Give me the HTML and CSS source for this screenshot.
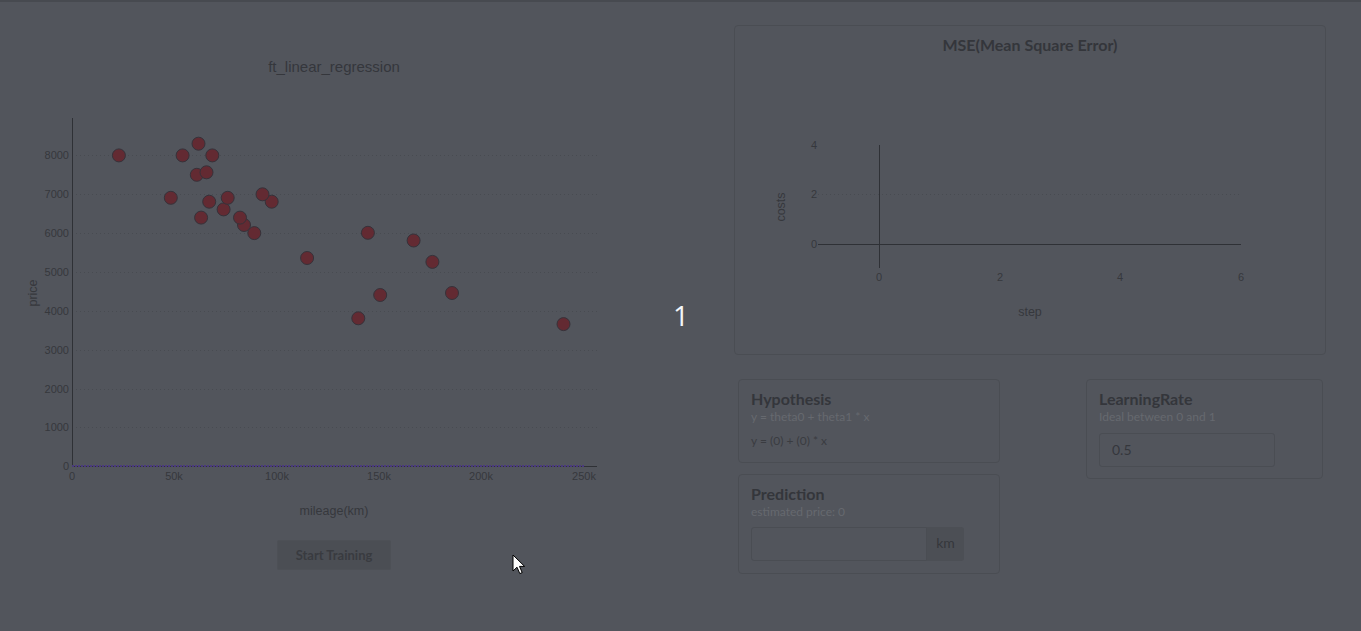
FILE: index.html
```html
<!DOCTYPE html>
<html>
<head>
<meta charset="utf-8">
<link rel="stylesheet" href="styles.css">
</head>
<body>
<div class="app">
  <section class="left">
    <svg class="scatter" width="668" height="528" viewBox="0 2 668 528">
      <text class="ptitle" x="334" y="72" text-anchor="middle">ft_linear_regression</text>
      <g class="grid">
        <line x1="72" x2="597" y1="155.5" y2="155.5"/>
        <line x1="72" x2="597" y1="194.5" y2="194.5"/>
        <line x1="72" x2="597" y1="233.5" y2="233.5"/>
        <line x1="72" x2="597" y1="272.5" y2="272.5"/>
        <line x1="72" x2="597" y1="311.5" y2="311.5"/>
        <line x1="72" x2="597" y1="350.5" y2="350.5"/>
        <line x1="72" x2="597" y1="389.5" y2="389.5"/>
        <line x1="72" x2="597" y1="427.5" y2="427.5"/>
      </g>
      <g class="tick" text-anchor="end">
        <text x="69" y="159">8000</text>
        <text x="69" y="198">7000</text>
        <text x="69" y="237">6000</text>
        <text x="69" y="276">5000</text>
        <text x="69" y="315">4000</text>
        <text x="69" y="354">3000</text>
        <text x="69" y="393">2000</text>
        <text x="69" y="431">1000</text>
        <text x="69" y="470">0</text>
      </g>
      <g class="tick" text-anchor="middle">
        <text x="72" y="480">0</text>
        <text x="174" y="480">50k</text>
        <text x="277" y="480">100k</text>
        <text x="379" y="480">150k</text>
        <text x="481" y="480">200k</text>
        <text x="584" y="480">250k</text>
      </g>
      <line class="axis" x1="72.5" x2="72.5" y1="118" y2="467"/>
      <line class="axis" x1="72" x2="597" y1="466.5" y2="466.5"/>
      <line class="fit" x1="72" x2="584" y1="466" y2="466"/>
      <g class="dots">
        <circle cx="563.5" cy="324.1" r="6.5"/>
        <circle cx="358.3" cy="318.3" r="6.5"/>
        <circle cx="380.2" cy="295" r="6.5"/>
        <circle cx="452" cy="293" r="6.5"/>
        <circle cx="432.4" cy="261.9" r="6.5"/>
        <circle cx="307.1" cy="258" r="6.5"/>
        <circle cx="413.6" cy="240.5" r="6.5"/>
        <circle cx="254.3" cy="233.1" r="6.5"/>
        <circle cx="367.9" cy="232.8" r="6.5"/>
        <circle cx="244" cy="225" r="6.5"/>
        <circle cx="240" cy="217.6" r="6.5"/>
        <circle cx="201.1" cy="217.6" r="6.5"/>
        <circle cx="223.6" cy="209.4" r="6.5"/>
        <circle cx="271.7" cy="201.7" r="6.5"/>
        <circle cx="209.2" cy="201.7" r="6.5"/>
        <circle cx="227.7" cy="197.8" r="6.5"/>
        <circle cx="170.8" cy="197.8" r="6.5"/>
        <circle cx="262.5" cy="194.3" r="6.5"/>
        <circle cx="196.8" cy="174.8" r="6.5"/>
        <circle cx="206.5" cy="172.3" r="6.5"/>
        <circle cx="182.6" cy="155.4" r="6.5"/>
        <circle cx="212.3" cy="155.4" r="6.5"/>
        <circle cx="118.9" cy="155.4" r="6.5"/>
        <circle cx="198.5" cy="143.7" r="6.5"/>
      </g>
      <text class="alabel" x="0" y="0" text-anchor="middle" transform="translate(37 293) rotate(-90)">price</text>
      <text class="alabel" x="334" y="515" text-anchor="middle">mileage(km)</text>
    </svg>
    <button class="train">Start Training</button>
  </section>

  <section class="right">
    <div class="card mse">
      <h3 class="mse-title">MSE(Mean Square Error)</h3>
      <svg class="msechart" width="590" height="298" viewBox="0 0 590 298">
        <line class="grid" x1="83" x2="506" y1="138.5" y2="138.5"/>
        <line class="axis" x1="144.5" x2="144.5" y1="89" y2="212"/>
        <line class="axis" x1="83" x2="506" y1="188.5" y2="188.5"/>
        <g class="tick" text-anchor="end">
          <text x="82" y="93">4</text>
          <text x="82" y="142">2</text>
          <text x="82" y="192">0</text>
        </g>
        <g class="tick" text-anchor="middle">
          <text x="144" y="225">0</text>
          <text x="265" y="225">2</text>
          <text x="385" y="225">4</text>
          <text x="506" y="225">6</text>
        </g>
        <text class="alabel" x="0" y="0" text-anchor="middle" transform="translate(50 151) rotate(-90)">costs</text>
        <text class="alabel" x="295" y="260" text-anchor="middle">step</text>
      </svg>
    </div>

    <div class="bottom">
      <div class="stack">
        <div class="card panel hyp">
          <h4 class="ptitle2">Hypothesis</h4>
          <p class="sub">y = theta0 + theta1 * x</p>
          <p class="value">y = (0) + (0) * x</p>
        </div>
        <div class="card panel pred">
          <h4 class="ptitle2">Prediction</h4>
          <p class="sub">estimated price: 0</p>
          <div class="group">
            <input class="field" type="text" value="">
            <span class="addon">km</span>
          </div>
        </div>
      </div>
      <div class="card panel lr">
        <h4 class="ptitle2">LearningRate</h4>
        <p class="sub">Ideal between 0 and 1</p>
        <input class="field single" type="text" value="0.5">
      </div>
    </div>
  </section>

  <div class="counter">1</div>
  <svg class="cursor" width="14" height="22" viewBox="0 0 14 22">
    <path d="M1 1 L1 17 L5 13.2 L7.8 19.6 L10.2 18.6 L7.5 12.4 L12.6 12.4 Z" fill="#ffffff" stroke="#000000" stroke-width="1" stroke-linejoin="round"/>
  </svg>
</div>
</body>
</html>
```

FILE: styles.css
```css
* { box-sizing: border-box; }
html, body {
  margin: 0;
  padding: 0;
  background: #52555c;
  width: 1361px;
  height: 631px;
  overflow: hidden;
}
.app {
  position: relative;
  display: flex;
  width: 1361px;
  height: 631px;
  border-top: 2px solid #474a50;
  font-family: "Lato", "Liberation Sans", sans-serif;
  color: #33353a;
}
.left {
  width: 668px;
  display: flex;
  flex-direction: column;
  align-items: center;
}
.scatter { display: block; }
.ptitle {
  font-family: "Liberation Sans", Arial, sans-serif;
  font-size: 15px;
  fill: #35373c;
}
.tick text, .tick {
  font-family: "Liberation Sans", Arial, sans-serif;
  font-size: 11px;
  fill: #36383d;
}
.alabel {
  font-family: "Liberation Sans", Arial, sans-serif;
  font-size: 12.5px;
  fill: #36383d;
}
.grid line, line.grid {
  stroke: #484b51;
  stroke-width: 1;
  stroke-dasharray: 1 3;
}
.axis {
  stroke: #2f3136;
  stroke-width: 1;
}
.fit {
  stroke: #4a3a7e;
  stroke-width: 2.2;
  stroke-dasharray: 2 1;
}
.dots circle {
  fill: #632a32;
  stroke: #36323a;
  stroke-width: 1;
}
.train {
  margin-top: 10px;
  width: 114px;
  height: 30px;
  border: 1px solid #4d5056;
  border-radius: 2px;
  background: #4b4e54;
  color: #393b40;
  font-family: "Lato", sans-serif;
  font-weight: 700;
  font-size: 13px;
  padding: 0;
}
.right {
  flex: 1;
  padding-left: 66px;
  padding-top: 23px;
}
.card {
  border: 1px solid #4a4d53;
  border-radius: 4px;
}
.mse {
  width: 592px;
  height: 330px;
}
.mse-title {
  margin: 0;
  padding-top: 9px;
  height: 30px;
  line-height: 20px;
  text-align: center;
  font-size: 16px;
  font-weight: 700;
  color: #34363b;
}
.msechart { display: block; }
.bottom {
  display: flex;
  justify-content: space-between;
  width: 592px;
  margin-top: 24px;
}
.stack {
  margin-left: 4px;
  width: 262px;
  display: flex;
  flex-direction: column;
  gap: 11px;
}
.panel {
  padding: 9px 12px 12px 12px;
}
.hyp { height: 84px; }
.pred { height: 100px; }
.lr {
  width: 237px;
  height: 100px;
  margin-right: 3px;
}
.ptitle2 {
  margin: 0;
  font-size: 16px;
  line-height: 20px;
  font-weight: 700;
  color: #34363b;
}
.sub {
  margin: 0;
  font-size: 12px;
  line-height: 16px;
  color: #66696f;
}
.value {
  margin: 8px 0 0 0;
  font-size: 12px;
  line-height: 16px;
  color: #3a3c41;
}
.group {
  display: flex;
  margin-top: 7px;
  height: 34px;
  width: 213px;
}
.field {
  width: 176px;
  height: 34px;
  border: 1px solid #4a4d53;
  border-radius: 3px 0 0 3px;
  background: #52555c;
  padding: 0 12px;
  font-family: "Lato", sans-serif;
  font-size: 14px;
  color: #35373c;
  outline: none;
}
.addon {
  width: 37px;
  height: 34px;
  display: flex;
  align-items: center;
  justify-content: center;
  padding-bottom: 4px;
  background: #4c4f55;
  border-radius: 0 3px 3px 0;
  font-size: 14px;
  color: #35373c;
}
.field.single {
  margin-top: 8px;
  border-radius: 3px;
  padding-bottom: 2px;
}
.counter {
  position: absolute;
  left: 673px;
  top: 296px;
  font-family: "Open Sans", "Liberation Sans", sans-serif;
  font-size: 28px;
  line-height: 34px;
  color: #f4f6fa;
}
.cursor {
  position: absolute;
  left: 512px;
  top: 552px;
}
```
